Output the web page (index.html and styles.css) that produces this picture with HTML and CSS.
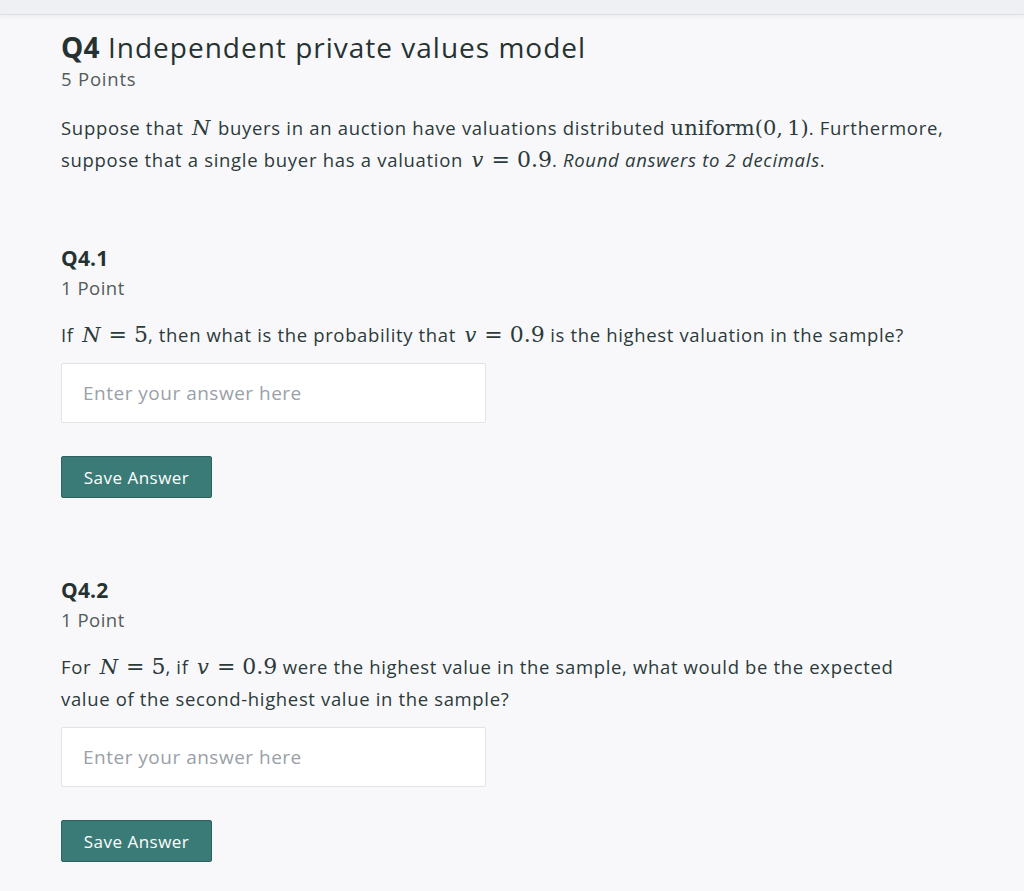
FILE: index.html
```html
<!DOCTYPE html>
<html>
<head>
<meta charset="utf-8">
<link rel="stylesheet" href="styles.css">
</head>
<body>
<div class="topbar"></div>
<main class="content">
  <section class="question">
    <h1 class="q-title"><strong>Q4</strong> Independent private values model</h1>
    <div class="points">5 Points</div>
    <p class="text">Suppose that <span class="mi">N</span> buyers in an auction have valuations distributed <span class="mrm">uniform(0,&#8201;1)</span>. Furthermore, suppose that a single buyer has a valuation <span class="mi">v</span><span class="mo">=</span><span class="mn">0.9</span>. <em>Round answers to 2 decimals</em>.</p>
  </section>

  <section class="sub">
    <h2 class="sub-title">Q4.1</h2>
    <div class="sub-points">1 Point</div>
    <p class="text text-sub">If <span class="mi">N</span><span class="mo">=</span><span class="mn">5</span>, then what is the probability that <span class="mi">v</span><span class="mo">=</span><span class="mn">0.9</span> is the highest valuation in the sample?</p>
    <input class="answer" type="text" placeholder="Enter your answer here">
    <button class="save">Save Answer</button>
  </section>

  <section class="sub">
    <h2 class="sub-title">Q4.2</h2>
    <div class="sub-points">1 Point</div>
    <p class="text text-sub">For <span class="mi">N</span><span class="mo">=</span><span class="mn">5</span>, if <span class="mi">v</span><span class="mo">=</span><span class="mn">0.9</span> were the highest value in the sample, what would be the expected value of the second-highest value in the sample?</p>
    <input class="answer" type="text" placeholder="Enter your answer here">
    <button class="save">Save Answer</button>
  </section>
</main>
</body>
</html>
```

FILE: styles.css
```css
html, body {
  margin: 0;
  padding: 0;
  background: #f8f8fa;
}
body {
  font-family: "Open Sans", "Lato", sans-serif;
  color: #2c3a3a;
  height: 891px;
  overflow: hidden;
}
.topbar {
  height: 14px;
  background: #eff0f3;
  border-bottom: 1px solid #dcdfe4;
  box-shadow: 0 2px 4px rgba(0,0,0,0.05);
}
.content {
  padding: 14px 60px 0 61px;
}
.q-title {
  margin: 0;
  font-size: 28px;
  font-weight: 400;
  letter-spacing: 1px;
  line-height: 36px;
  color: #263232;
}
.q-title strong { font-weight: 700; letter-spacing: 0.2px; }
.points {
  font-size: 18.5px;
  letter-spacing: 0.8px;
  line-height: 28px;
  color: #545b5c;
}
.text {
  font-size: 18.5px;
  letter-spacing: 0.7px;
  line-height: 32px;
  margin: 19px 0 0;
  width: 888px;
}
.text-sub {
  margin-top: 17px;
  width: 850px;
  letter-spacing: 0.65px;
}
.mi {
  font-family: "DejaVu Serif", "Liberation Serif", serif;
  font-style: italic;
  font-size: 21px;
  letter-spacing: 0;
  line-height: 1;
  padding: 0 2px 0 3px;
}
.mrm {
  font-family: "DejaVu Serif", "Liberation Serif", serif;
  font-size: 21px;
  letter-spacing: 0;
  line-height: 1;
}
.mn {
  font-family: "DejaVu Serif", "Liberation Serif", serif;
  font-size: 22px;
  letter-spacing: 0;
  line-height: 1;
}
.mo {
  font-family: "DejaVu Sans", "Liberation Serif", serif;
  font-size: 22px;
  letter-spacing: 0;
  line-height: 1;
  padding: 0 7px 0 6px;
}
em { font-style: italic; }
.sub { margin-top: 68px; }
.sub + .sub { margin-top: 78px; }
.sub-title {
  margin: 0;
  font-size: 21px;
  font-weight: 700;
  letter-spacing: 0.2px;
  line-height: 28px;
  color: #263232;
}
.sub-points {
  margin-top: 2px;
  font-size: 18.5px;
  letter-spacing: 0.5px;
  line-height: 28px;
  color: #545b5c;
}
.answer {
  display: block;
  box-sizing: border-box;
  width: 425px;
  height: 60px;
  margin-top: 12px;
  padding: 0 21px;
  background: #fff;
  border: 1px solid #e1e3e7;
  border-radius: 2px;
  font-family: inherit;
  font-size: 19px;
  letter-spacing: 0.5px;
  color: #2c3a3a;
  outline: none;
}
.answer::placeholder { color: #9aa0a8; }
.save {
  display: block;
  box-sizing: border-box;
  width: 151px;
  height: 42px;
  margin-top: 33px;
  background: #3b7b77;
  border: 1px solid #2d625f;
  border-radius: 2px;
  color: #fff;
  font-family: inherit;
  font-size: 17px;
  letter-spacing: 0.5px;
  font-weight: 400;
  padding: 0;
}
```
